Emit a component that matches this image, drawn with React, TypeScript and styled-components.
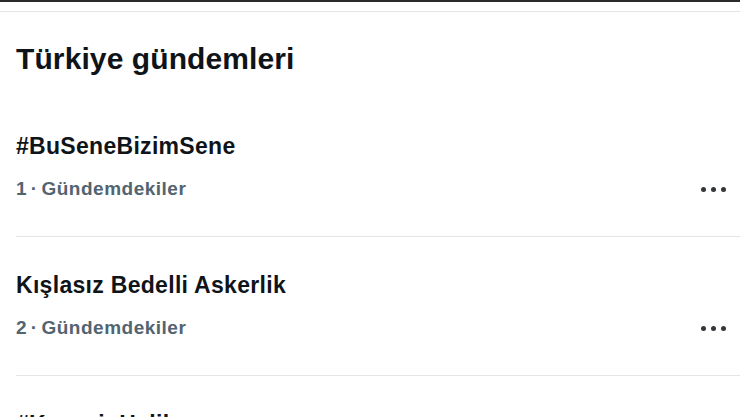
import * as React from "react";
import styled, {createGlobalStyle} from "styled-components";

const GlobalStyle = createGlobalStyle`
    html, body {
        margin: 0;
        padding: 0;
        background: #ffffff;
    }
    body {
        font-family: "Liberation Sans", Arial, sans-serif;
        color: #0f1419;
        overflow: hidden;
    }
`;

const Page = styled.div`
    width: 740px;
    height: 417px;
    overflow: hidden;
    background: #ffffff;
`;

const TopEdge = styled.div`
    height: 2px;
    background: #2b2b2b;
`;

const HeaderLine = styled.div`
    margin-top: 9px;
    height: 1px;
    background: #e3e5e6;
`;

const Title = styled.h2`
    margin: 0;
    padding: 29px 16px 21px;
    font-size: 30px;
    line-height: 36px;
    font-weight: 700;
    letter-spacing: 0.1px;
`;

const Trend = styled.div`
    padding: 34px 0 0 16px;
`;

const TrendName = styled.div`
    font-size: 23px;
    line-height: 28px;
    font-weight: 700;
    letter-spacing: 0.3px;
    color: #0f1419;
`;

const MetaRow = styled.div`
    margin-top: 18px;
    padding-right: 14px;
    display: flex;
    align-items: center;
    justify-content: space-between;
    height: 22px;
`;

const Meta = styled.span`
    font-size: 19px;
    line-height: 22px;
    font-weight: 700;
    letter-spacing: 0.5px;
    word-spacing: -2px;
    color: #536471;
`;

const MoreButton = styled.div`
    display: flex;
    gap: 5px;
`;

const Dot = styled.span`
    width: 5px;
    height: 5px;
    border-radius: 50%;
    background: #33373b;
`;

const Divider = styled.div`
    margin-top: 36px;
    height: 1px;
    background: #e3e5e6;
`;

const trends = [
    {name: "#BuSeneBizimSene", rank: 1},
    {name: "Kışlasız Bedelli Askerlik", rank: 2},
    {name: "#KuzeyinHalil", rank: 3},
];

const App = () => {
    return (
        <Page>
            <GlobalStyle/>
            <TopEdge/>
            <HeaderLine/>
            <Title>Türkiye gündemleri</Title>
            {trends.map(t => (
                <Trend key={t.rank}>
                    <TrendName>{t.name}</TrendName>
                    <MetaRow>
                        <Meta>{t.rank} · Gündemdekiler</Meta>
                        <MoreButton>
                            <Dot/><Dot/><Dot/>
                        </MoreButton>
                    </MetaRow>
                    <Divider/>
                </Trend>
            ))}
        </Page>
    )
};

export default App;
